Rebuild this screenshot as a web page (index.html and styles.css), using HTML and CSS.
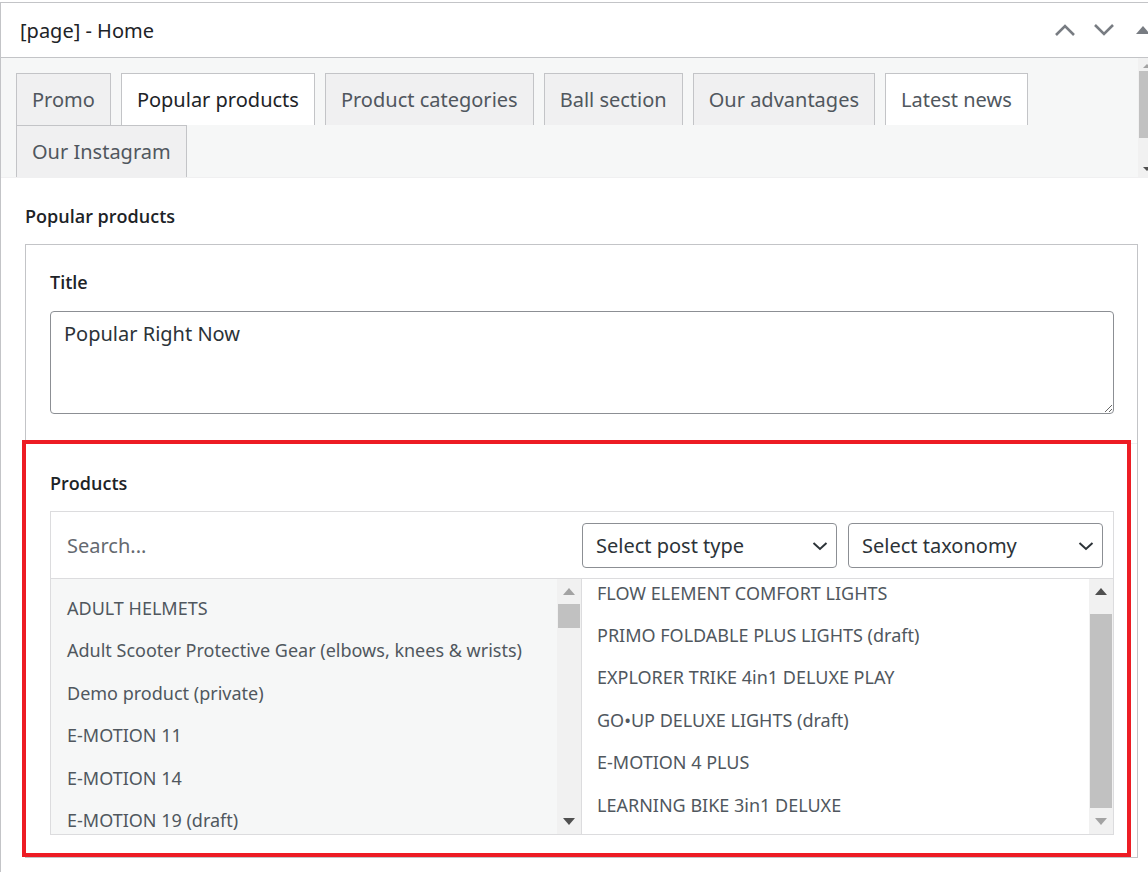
FILE: index.html
```html
<!DOCTYPE html>
<html lang="en">
<head>
    <meta charset="UTF-8">
    <meta name="viewport" content="width=device-width, initial-scale=1.0">
    <title>[page] - Home</title>
    <link rel="stylesheet" href="styles.css">
</head>
<body>
    <div class="postbox">
        <div class="postbox-header">
            <h2 class="hndle">[page] - Home</h2>
            <div class="handle-actions">
                <button class="handle-order" aria-label="Move up">
                    <svg width="22" height="12" viewBox="0 0 22 12"><polyline points="2,11 11,2 20,11" fill="none" stroke="currentColor" stroke-width="2.6"/></svg>
                </button>
                <button class="handle-order" aria-label="Move down">
                    <svg width="22" height="12" viewBox="0 0 22 12"><polyline points="2,1 11,10 20,1" fill="none" stroke="currentColor" stroke-width="2.6"/></svg>
                </button>
                <button class="handle-order" aria-label="Toggle panel">
                    <svg width="14" height="8" viewBox="0 0 14 8"><polygon points="0,8 7,0 14,8" fill="currentColor"/></svg>
                </button>
            </div>
        </div>

        <div class="tabs-wrap">
            <ul class="tabs">
                <li class="tab">Promo</li>
                <li class="tab active">Popular products</li>
                <li class="tab">Product categories</li>
                <li class="tab">Ball section</li>
                <li class="tab">Our advantages</li>
                <li class="tab light">Latest news</li>
                <li class="tab">Our Instagram</li>
            </ul>
            <div class="scrollbar scrollbar-thin">
                <span class="arrow up"></span>
                <span class="track"><span class="thumb"></span></span>
                <span class="arrow down"></span>
            </div>
        </div>

        <div class="inside">
            <div class="group-title">Popular products</div>
            <div class="fields">
                <div class="field">
                    <label class="field-label">Title</label>
                    <textarea class="field-textarea">Popular Right Now</textarea>
                </div>
                <div class="field field-products is-highlighted">
                    <label class="field-label">Products</label>
                    <div class="picker">
                        <div class="picker-filters">
                            <input class="picker-search" type="text" placeholder="Search...">
                            <div class="picker-select">
                                <span>Select post type</span>
                                <svg width="16" height="10" viewBox="0 0 16 10"><polyline points="1.5,2 8,8 14.5,2" fill="none" stroke="currentColor" stroke-width="2"/></svg>
                            </div>
                            <div class="picker-select">
                                <span>Select taxonomy</span>
                                <svg width="16" height="10" viewBox="0 0 16 10"><polyline points="1.5,2 8,8 14.5,2" fill="none" stroke="currentColor" stroke-width="2"/></svg>
                            </div>
                        </div>
                        <div class="picker-lists">
                            <div class="picker-pane choices">
                                <ul class="picker-items">
                                    <li>ADULT HELMETS</li>
                                    <li>Adult Scooter Protective Gear (elbows, knees &amp; wrists)</li>
                                    <li>Demo product (private)</li>
                                    <li>E-MOTION 11</li>
                                    <li>E-MOTION 14</li>
                                    <li>E-MOTION 19 (draft)</li>
                                </ul>
                                <div class="scrollbar">
                                    <span class="arrow up off"></span>
                                    <span class="track"><span class="thumb thumb-top"></span></span>
                                    <span class="arrow down"></span>
                                </div>
                            </div>
                            <div class="picker-pane values">
                                <ul class="picker-items at-end">
                                    <li>FLOW ELEMENT COMFORT LIGHTS</li>
                                    <li>PRIMO FOLDABLE PLUS LIGHTS (draft)</li>
                                    <li>EXPLORER TRIKE 4in1 DELUXE PLAY</li>
                                    <li>GO•UP DELUXE LIGHTS (draft)</li>
                                    <li>E-MOTION 4 PLUS</li>
                                    <li>LEARNING BIKE 3in1 DELUXE</li>
                                </ul>
                                <div class="scrollbar">
                                    <span class="arrow up"></span>
                                    <span class="track"><span class="thumb thumb-long"></span></span>
                                    <span class="arrow down off"></span>
                                </div>
                            </div>
                        </div>
                    </div>
                </div>
            </div>
        </div>
    </div>
</body>
</html>
```

FILE: styles.css
```css
body {
    margin: 0;
    background-color: #ffffff;
    font-family: 'Segoe UI', 'Noto Sans', sans-serif;
    color: #1d2327;
    overflow: hidden;
}
ul {
    margin: 0;
    padding: 0;
    list-style: none;
}
.postbox {
    width: 1164px;
    margin-top: 2px;
    border-top: 1px solid #c3c4c7;
    border-left: 1px solid #c3c4c7;
    box-sizing: border-box;
    background-color: #fff;
}
.postbox-header {
    display: flex;
    align-items: center;
    justify-content: space-between;
    height: 54px;
    border-bottom: 1px solid #c3c4c7;
}
.hndle {
    margin: 0;
    padding-left: 19px;
    font-size: 20px;
    font-weight: 400;
    color: #1d2327;
}
.handle-actions {
    display: flex;
    margin-right: 2px;
}
.handle-order {
    width: 39px;
    height: 54px;
    padding: 0;
    border: none;
    background: none;
    color: #787c82;
    display: flex;
    align-items: center;
    justify-content: center;
}
.tabs-wrap {
    display: flex;
    background-color: #f6f7f7;
    border-bottom: 1px solid #f0f0f1;
}
.tabs {
    flex: 1;
    display: flex;
    flex-wrap: wrap;
    padding: 15px 0 0 15px;
}
.tab {
    margin-right: 10px;
    padding: 12px 15px;
    font-size: 20px;
    line-height: 27px;
    color: #50575e;
    background-color: #f0f0f1;
    border: 1px solid #c3c4c7;
    border-bottom: none;
}
.tab.active {
    background-color: #fff;
    color: #1d2327;
}
.tab.light {
    background-color: #fff;
}
.scrollbar {
    width: 24px;
    display: flex;
    flex-direction: column;
    background-color: #f1f1f1;
}
.scrollbar-thin {
    width: 17px;
    margin-right: 9px;
}
.scrollbar .arrow {
    height: 25px;
    display: flex;
    align-items: center;
    justify-content: center;
}
.scrollbar .arrow::before {
    content: '';
    border-left: 6px solid transparent;
    border-right: 6px solid transparent;
}
.scrollbar .arrow.up::before {
    border-bottom: 7px solid #505050;
}
.scrollbar .arrow.down::before {
    border-top: 7px solid #505050;
}
.scrollbar .arrow.up.off::before {
    border-bottom-color: #a3a3a3;
}
.scrollbar .arrow.down.off::before {
    border-top-color: #a3a3a3;
}
.scrollbar .track {
    flex: 1;
    display: flex;
    flex-direction: column;
    padding: 0 1px;
}
.scrollbar .thumb {
    background-color: #c1c1c1;
    height: 70%;
}
.scrollbar-thin .arrow {
    height: 16px;
}
.scrollbar-thin .arrow::before {
    border-left-width: 4px;
    border-right-width: 4px;
}
.scrollbar-thin .arrow.up::before {
    border-bottom-width: 4px;
    border-bottom-color: #a3a3a3;
}
.scrollbar-thin .arrow.down::before {
    border-top-width: 4px;
}
.scrollbar-thin .thumb {
    height: 67px;
    margin-top: -3px;
}
.scrollbar .thumb-top {
    height: 24px;
}
.scrollbar .thumb-long {
    height: auto;
    flex: 1;
    margin: 10px 0 1px;
}
.inside {
    padding: 25px 26px 14px 24px;
}
.group-title {
    font-family: 'Segoe UI', 'Open Sans', sans-serif;
    font-size: 18px;
    font-weight: 600;
    line-height: 26px;
    color: #1d2327;
    margin-bottom: 15px;
}
.fields {
    border: 1px solid #c3c4c7;
}
.field {
    padding: 24px 23px 29px 24px;
    border-bottom: 1px solid #f0f0f1;
}
.field:last-child {
    border-bottom: none;
}
.field-label {
    display: block;
    font-family: 'Segoe UI', 'Open Sans', sans-serif;
    font-size: 18px;
    font-weight: 600;
    line-height: 26px;
    margin-bottom: 16px;
    color: #1d2327;
}
.field-textarea {
    display: block;
    width: 100%;
    height: 103px;
    box-sizing: border-box;
    padding: 8px 13px;
    font-family: inherit;
    font-size: 20px;
    line-height: 28px;
    color: #2c3338;
    border: 1px solid #8c8f94;
    border-radius: 4px;
    resize: vertical;
}
.field-products {
    position: relative;
    padding-top: 26px;
    padding-bottom: 22px;
}
.field-products .field-label {
    margin-bottom: 15px;
}
/* red frame drawn over the products field */
.is-highlighted::after {
    content: '';
    position: absolute;
    left: -4px;
    top: -4px;
    right: 6px;
    bottom: 0;
    border: 4px solid #ed1c24;
    pointer-events: none;
}
.picker {
    border: 1px solid #dcdcde;
}
.picker-filters {
    display: flex;
    align-items: center;
    gap: 11px;
    padding: 11px 10px 10px 0;
    border-bottom: 1px solid #dcdcde;
}
.picker-search {
    flex: 1;
    min-width: 0;
    height: 45px;
    padding: 0 0 0 16px;
    border: none;
    outline: none;
    font-family: inherit;
    font-size: 20px;
    color: #2c3338;
}
.picker-search::placeholder {
    color: #646970;
}
.picker-select {
    width: 255px;
    height: 45px;
    box-sizing: border-box;
    display: flex;
    align-items: center;
    justify-content: space-between;
    padding: 0 8px 0 13px;
    font-size: 20px;
    color: #2c3338;
    border: 1px solid #8c8f94;
    border-radius: 4px;
    background-color: #fff;
}
.picker-lists {
    display: grid;
    grid-template-columns: 1fr 1fr;
    height: 255px;
}
.picker-pane {
    display: flex;
    overflow: hidden;
}
.picker-pane.choices {
    background-color: #f6f7f7;
    border-right: 1px solid #dcdcde;
}
.picker-pane.values {
    background-color: #fff;
}
.picker-items {
    flex: 1;
    display: flex;
    flex-direction: column;
    padding: 8px 0;
    overflow: hidden;
}
.picker-items.at-end {
    justify-content: flex-end;
}
.picker-items li {
    flex-shrink: 0;
    padding: 8px 16px;
    font-size: 18px;
    line-height: 26.4px;
    color: #50575e;
    white-space: nowrap;
}
.values .picker-items li {
    padding-left: 15px;
}
```
